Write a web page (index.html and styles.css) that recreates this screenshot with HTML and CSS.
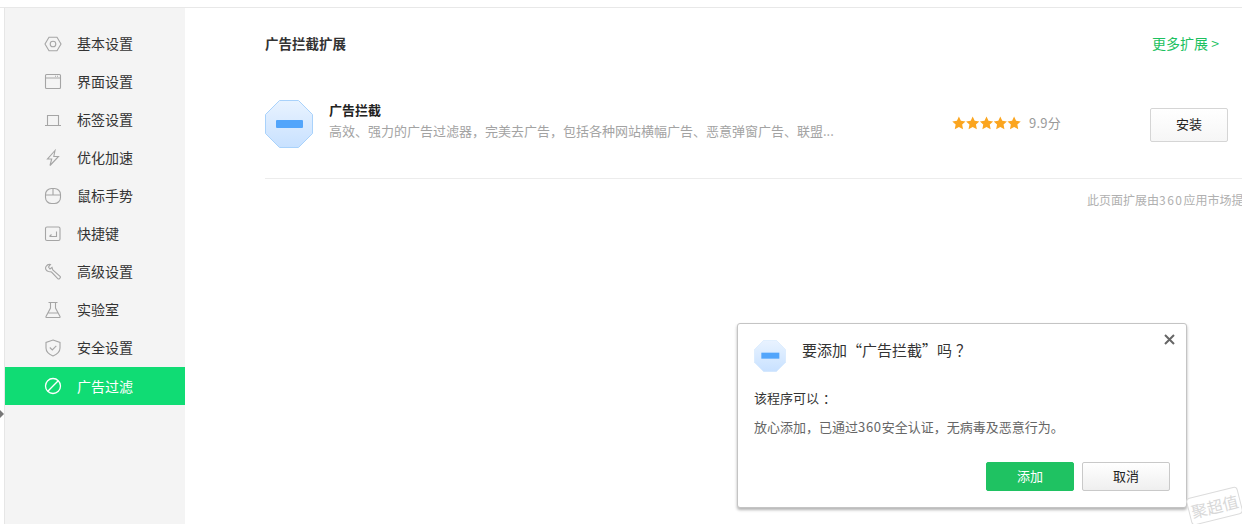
FILE: index.html
```html
<!DOCTYPE html>
<html lang="zh-CN">
<head>
<meta charset="utf-8">
<title>广告过滤</title>
<link rel="stylesheet" href="styles.css">
</head>
<body>
<div class="topbar"></div>
<div class="app">
  <nav class="sidebar">
    <a class="nav-item"><svg class="nav-icon" viewBox="0 0 18 18"><path d="M5 2.200h8L17 9l-4 6.800H5L1 9z"/><circle cx="9" cy="9" r="2.800"/></svg><span>基本设置</span></a>
    <a class="nav-item"><svg class="nav-icon" viewBox="0 0 18 18"><rect x="1.500" y="1.500" width="15" height="14" rx="1"/><path d="M1.500 5h15M11 3.200h1M13 3.200h1"/></svg><span>界面设置</span></a>
    <a class="nav-item"><svg class="nav-icon" viewBox="0 0 18 18"><path d="M3.500 14.500V4.500h11v10M1 14.500h16"/></svg><span>标签设置</span></a>
    <a class="nav-item"><svg class="nav-icon" viewBox="0 0 18 18"><path d="M11 1.500 3.500 10h4.200L6 16.500 14.500 7.500h-4.700z"/></svg><span>优化加速</span></a>
    <a class="nav-item"><svg class="nav-icon" viewBox="0 0 18 18"><rect x="1.500" y="1.500" width="15" height="15" rx="6"/><path d="M1.500 8h15M9 1.500V8"/></svg><span>鼠标手势</span></a>
    <a class="nav-item"><svg class="nav-icon" viewBox="0 0 18 18"><rect x="1.500" y="2" width="14.500" height="13.500" rx="1.500"/><path d="M12.500 6.500v5H5.500M7.500 9.500l-2 2"/></svg><span>快捷键</span></a>
    <a class="nav-item"><svg class="nav-icon" viewBox="0 0 18 18"><path d="M6.500 1.500 4.500 4 6 6 8 4.500l.8 2.500 7.500 6.500c.6 1-1.200 3-2.300 2.300L7.500 9 4.500 8.500C2 8 .8 5.500 2 3.500 3 2 5 1.200 6.500 1.500z"/></svg><span>高级设置</span></a>
    <a class="nav-item"><svg class="nav-icon" viewBox="0 0 18 18"><path d="M4.500 1.500h9M6.500 1.500v5.500L2 15.500c-.3.600 0 1 .6 1h12.800c.6 0 .9-.4.600-1L11.500 7V1.500M4.500 12h9"/></svg><span>实验室</span></a>
    <a class="nav-item"><svg class="nav-icon" viewBox="0 0 18 18"><path d="M9 1 16 3.500V9c0 4-3.500 6.500-7 8-3.500-1.500-7-4-7-8V3.500z"/><path d="M5.800 8.500 8.300 11l4-4.200"/></svg><span>安全设置</span></a>
    <a class="nav-item active"><svg class="nav-icon" viewBox="0 0 18 18"><circle cx="9" cy="9" r="7.500"/><path d="M3.800 14.200 14.200 3.800"/></svg><span>广告过滤</span></a>
  </nav>
  <main class="content">
    <header class="section-head">
      <h2>广告拦截扩展</h2>
      <a class="more">更多扩展 &gt;</a>
    </header>
    <section class="ext-row">
      <svg class="ext-icon" viewBox="0 0 48 48">
        <defs>
          <linearGradient id="octa" x1="0" y1="0" x2="0" y2="1"><stop offset="0" stop-color="#e9f3ff"/><stop offset="1" stop-color="#c8e1ff"/></linearGradient>
          <path id="star" d="M7 .5l2 4.300 4.700.6-3.400 3.200.9 4.700L7 11l-4.200 2.300.9-4.700L.3 5.400 5 4.800z"/>
        </defs>
        <path d="M14.500.5h19l14 14v19l-14 14h-19l-14-14v-19z" fill="url(#octa)" stroke="#a9d2fb"/>
        <rect x="11" y="20" width="27" height="8" rx="1" fill="#52a5fb"/>
      </svg>
      <div class="ext-info">
        <h3>广告拦截</h3>
        <p>高效、强力的广告过滤器，完美去广告，包括各种网站横幅广告、恶意弹窗广告、联盟...</p>
      </div>
      <div class="rating">
        <svg class="stars" viewBox="0 0 70 14"><use href="#star"/><use href="#star" x="14"/><use href="#star" x="28"/><use href="#star" x="42"/><use href="#star" x="56"/></svg>
        <span class="score">9.9分</span>
      </div>
      <button class="install">安装</button>
    </section>
    <p class="provider">此页面扩展由<span class="num-wide">360</span>应用市场提供</p>
  </main>
</div>
<span class="edge-arrow"></span>
<aside class="dialog">
  <button class="close" aria-label="关闭"><svg viewBox="0 0 11 11"><path d="M1 1l9 9M10 1l-9 9"/></svg></button>
  <div class="dialog-head">
    <svg class="dialog-icon" viewBox="0 0 48 48">
      <path d="M14.500.5h19l14 14v19l-14 14h-19l-14-14v-19z" fill="url(#octa)" stroke="#d5e8fd"/>
      <rect x="11" y="19" width="27" height="9" fill="#52a5fb"/>
    </svg>
    <span class="dialog-title">要添加“广告拦截”吗<span class="punct">？</span></span>
  </div>
  <p class="dialog-sub">该程序可以<span class="punct">：</span></p>
  <p class="dialog-text">放心添加，已通过<span class="num">360</span>安全认证，无病毒及恶意行为。</p>
  <div class="dialog-actions">
    <button class="btn-add">添加</button>
    <button class="btn-cancel">取消</button>
  </div>
</aside>
<div class="watermark"><span>聚超值</span></div>
</body>
</html>
```

FILE: styles.css
```css
* { box-sizing: border-box; }
html, body { margin: 0; height: 100%; overflow: hidden; background: #fff; }
body {
  position: relative;
  font-family: "Noto Sans CJK SC", "Liberation Sans", sans-serif;
  font-size: 13px;
  color: #333;
  text-spacing-trim: space-all;
}
.topbar { height: 8px; border-bottom: 1px solid #e8e8e8; }
.app { display: flex; height: 516px; }
.sidebar {
  width: 181px;
  padding-top: 17px;
  margin-left: 4px;
  background: #f4f4f4;
  border-left: 1px solid #e6e6e6;
}
.nav-item {
  display: flex;
  align-items: center;
  height: 38px;
  padding-left: 39px;
  font-size: 14px;
  color: #333;
}
.nav-item span { margin-bottom: 2px; }
.nav-item.active span { margin-bottom: 0; }
.nav-icon {
  width: 18px;
  height: 18px;
  margin-right: 15px;
  fill: none;
  stroke: #a5a5a5;
  stroke-width: 1.100;
}
.nav-item.active { background: #10dc74; color: #fff; }
.nav-item.active .nav-icon { stroke: #fff; stroke-width: 1.300; }
.content { flex: 1; min-width: 0; padding-left: 80px; }
.section-head {
  display: flex;
  justify-content: space-between;
  align-items: center;
  height: 20px;
  margin-top: 25px;
  padding-right: 23px;
}
.section-head h2 { margin: 0; font-size: 13.500px; font-weight: 700; color: #333; }
.more { font-size: 14px; color: #1cc15f; }
.ext-row {
  display: flex;
  align-items: center;
  height: 126px;
  padding: 18px 14px 0 0;
  border-bottom: 1px solid #ececec;
}
.ext-icon { width: 48px; height: 48px; flex: none; margin-right: 16px; margin-top: -1px; }
.ext-info { width: 623px; flex: none; margin-top: -7px; }
.ext-info h3 { margin: 0 0 2px; font-size: 13px; line-height: 18px; font-weight: 700; color: #222; }
.ext-info p { margin: 0; font-size: 13px; line-height: 20px; color: #a3a3a3; white-space: nowrap; }
.rating { display: flex; align-items: center; width: 198px; flex: none; margin-top: -4px; }
.stars { width: 69px; height: 14px; flex: none; fill: #fba51f; }
.score { margin-left: 8px; font-size: 13px; letter-spacing: .2px; color: #999; }
.install {
  width: 78px;
  height: 34px;
  padding: 0 0 3px;
  margin-top: 1px;
  font: inherit;
  color: #222;
  border: 1px solid #d5d5d5;
  border-radius: 2px;
  background: linear-gradient(#fff, #f6f6f6);
}
.provider {
  margin: 12px 0 0 822px;
  font-size: 12px;
  line-height: 18px;
  color: #b0b0b0;
  white-space: nowrap;
}
.num-wide { letter-spacing: 1.500px; }
.num { letter-spacing: .7px; }
.punct { margin-left: 4px; font-family: "Noto Sans CJK TC", sans-serif; }
.edge-arrow {
  position: absolute;
  left: 0;
  top: 410px;
  border: 4px solid transparent;
  border-left-color: #777;
  border-right-width: 0;
}
.dialog {
  position: absolute;
  left: 737px;
  top: 323px;
  width: 450px;
  height: 185px;
  padding: 16px 16px 0;
  background: #fff;
  border: 1px solid #c4c4c4;
  border-radius: 3px;
  box-shadow: 0 2px 3px rgba(0, 0, 0, .3);
}
.close {
  position: absolute;
  right: 11px;
  top: 10px;
  width: 11px;
  height: 11px;
  padding: 0;
  border: 0;
  background: none;
}
.close svg { display: block; width: 11px; height: 11px; fill: none; stroke: #666; stroke-width: 2; }
.dialog-head { display: flex; align-items: flex-start; height: 32px; }
.dialog-icon { width: 32px; height: 32px; margin-right: 16px; flex: none; }
.dialog-title { font-size: 15px; line-height: 20px; color: #333; white-space: nowrap; }
.dialog-sub { margin: 16px 0 0; line-height: 20px; color: #333; }
.dialog-text { margin: 9px 0 0; line-height: 20px; color: #666; }
.dialog-actions { display: flex; justify-content: flex-end; gap: 8px; margin-top: 25px; }
.dialog-actions button { width: 88px; height: 29px; padding: 0 0 2px; font: inherit; border-radius: 2px; }
.btn-add { color: #fff; background: #1fc262; border: 1px solid #1fc262; }
.btn-cancel { color: #222; border: 1px solid #c9c9c9; background: linear-gradient(#fff, #efefef); }
.watermark {
  position: absolute;
  left: 1188px;
  top: 492px;
  width: 53px;
  height: 28px;
  display: flex;
  align-items: center;
  justify-content: center;
  border: 1px solid #dcdcdc;
  border-radius: 4px;
  background: #fff;
  transform: rotate(-14deg);
}
.watermark span { font-size: 16px; color: #d8d8d8; white-space: nowrap; }
```
